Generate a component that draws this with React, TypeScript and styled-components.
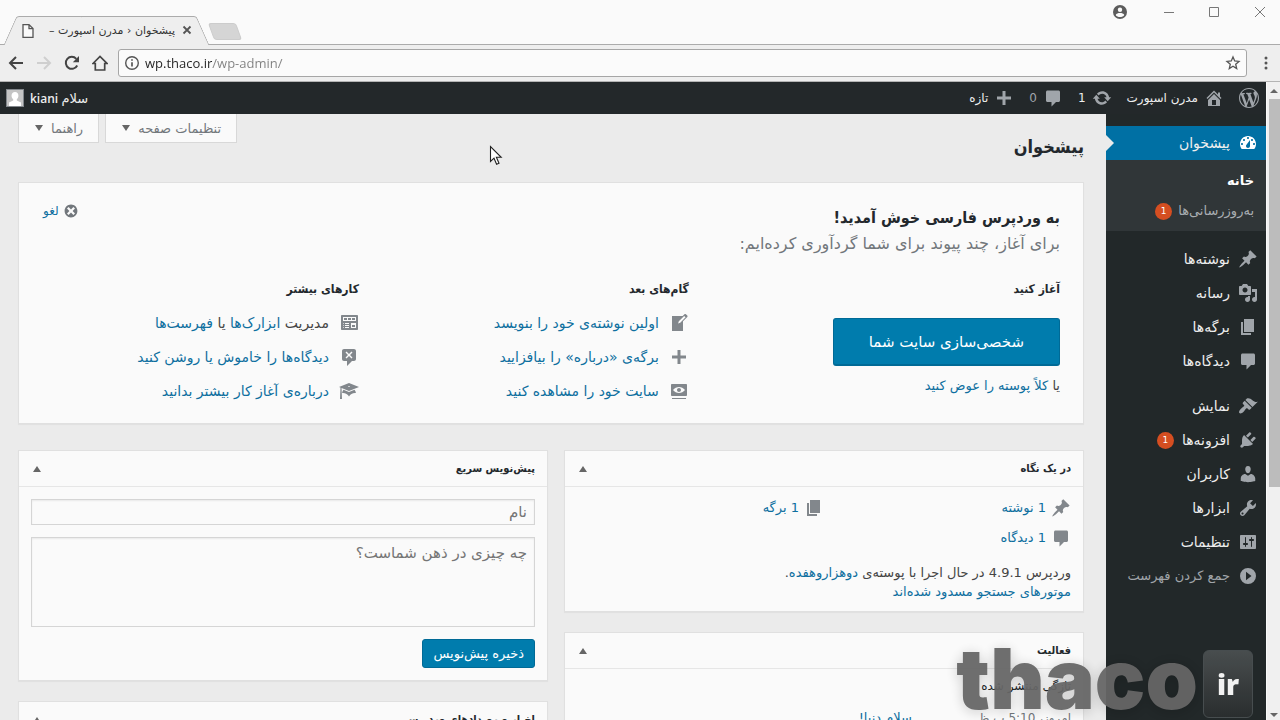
import React from "react";
import styled, { createGlobalStyle, css } from "styled-components";

const persian = '"DejaVu Sans", "Noto Sans", sans-serif';
const heading = '"DejaVu Sans Condensed", "DejaVu Sans", sans-serif';
const latin = '"Open Sans", "DejaVu Sans", sans-serif';

const GlobalStyle = createGlobalStyle`
  *, *::before, *::after { box-sizing: border-box; }
  body { margin: 0; background: #ebebeb; font-family: ${persian}; font-size: 13px; line-height: 20px; color: #444; }
  h1, h2, h3, p, ul { margin: 0; padding: 0; }
  h1, h2, h3 { font-family: ${heading}; color: #23282d; }
  ul { list-style: none; }
  button, input, textarea { font-family: inherit; }
  button { border: 0; background: none; padding: 0; cursor: pointer; color: inherit; }
  a { color: #0e6f9f; text-decoration: none; }
`;

const paths = {
  wordpress:
    "M20 10c0-5.51-4.49-10-10-10C4.48 0 0 4.49 0 10c0 5.52 4.48 10 10 10 5.51 0 10-4.48 10-10zM7.78 15.37L4.37 6.22c.55-.02 1.17-.08 1.17-.08.5-.06.44-1.13-.06-1.11 0 0-1.45.11-2.37.11-.18 0-.37 0-.58-.01C4.12 2.69 6.87 1.11 10 1.11c2.33 0 4.45.87 6.05 2.34-.68-.11-1.65.39-1.65 1.58 0 .74.45 1.36.9 2.1.35.61.55 1.36.55 2.46 0 1.49-1.4 5-1.4 5l-3.03-8.37c.54-.02.82-.17.82-.17.5-.05.44-1.25-.06-1.22 0 0-1.44.12-2.38.12-.87 0-2.33-.12-2.33-.12-.5-.03-.56 1.2-.06 1.22l.92.08 1.26 3.41zM17.41 10c.24-.64.74-1.87.43-4.25.7 1.29 1.05 2.71 1.05 4.25 0 3.29-1.73 6.24-4.4 7.78.97-2.59 1.94-5.2 2.92-7.78zM6.1 18.09C3.12 16.65 1.11 13.53 1.11 10c0-1.3.23-2.48.72-3.59C3.25 10.3 4.67 14.2 6.1 18.09zm4.03-6.63l2.58 6.98c-.86.29-1.76.45-2.71.45-.79 0-1.57-.11-2.29-.33.81-2.38 1.62-4.74 2.42-7.1z",
  home: "M16 8.5l1.53 1.53-1.06 1.06L10 4.6l-6.47 6.49-1.06-1.06L10 2.5l4 4v-2h2v4zm-6-2.46l6 5.99V18H4v-5.97zM12 17v-5H8v5h4z",
  update:
    "M10.2 3.28c3.53 0 6.43 2.61 6.92 6h2.08l-3.5 4-3.5-4h2.32c-.45-1.97-2.21-3.45-4.32-3.45-1.45 0-2.73.71-3.54 1.78L4.95 5.66C6.23 4.2 8.11 3.28 10.2 3.28zm-.4 13.44c-3.52 0-6.43-2.61-6.92-6H.8l3.5-4c1.17 1.33 2.33 2.67 3.5 4H5.48c.45 1.97 2.21 3.45 4.32 3.45 1.45 0 2.73-.71 3.54-1.78l1.71 1.95c-1.28 1.46-3.15 2.38-5.25 2.38z",
  comment:
    "M4.500 2.500h11c.8 0 1.500.7 1.500 1.500v8.500c0 .8-.7 1.500-1.500 1.500H13l-4.500 4.500V14h-4c-.8 0-1.500-.7-1.500-1.500V4c0-.8.7-1.500 1.500-1.500z",
  plus: "M17 8.5v3h-5.5V17h-3v-5.5H3v-3h5.5V3h3v5.5z",
  dashboard:
    "M3.76 16h12.48c1.1-1.37 1.76-3.11 1.76-5 0-4.42-3.58-8-8-8s-8 3.58-8 8c0 1.89.66 3.63 1.76 5zM10 4c.55 0 1 .45 1 1s-.45 1-1 1-1-.45-1-1 .45-1 1-1zM6 6c.55 0 1 .45 1 1s-.45 1-1 1-1-.45-1-1 .45-1 1-1zm8 0c.55 0 1 .45 1 1s-.45 1-1 1-1-.45-1-1 .45-1 1-1zm-5.37 5.55L12 7v6c0 1.1-.9 2-2 2s-2-.9-2-2c0-.57.24-1.08.63-1.45zM4 10c.55 0 1 .45 1 1s-.45 1-1 1-1-.45-1-1 .45-1 1-1zm12 0c.55 0 1 .45 1 1s-.45 1-1 1-1-.45-1-1 .45-1 1-1z",
  pin: "M10.44 3.02l1.82-1.82 6.36 6.35-1.83 1.82c-1.05-.68-2.48-.57-3.41.36l-.75.75c-.92.93-1.04 2.35-.35 3.41l-1.83 1.82-2.41-2.41-2.8 2.79c-.42.42-3.38 2.71-3.8 2.29s1.86-3.39 2.28-3.81l2.79-2.79L4.1 9.36l1.83-1.82c1.05.69 2.48.57 3.4-.36l.75-.75c.93-.92 1.05-2.35.36-3.41z",
  media:
    "M13 11V4c0-.55-.45-1-1-1h-1.67L9 1H5L3.67 3H2c-.55 0-1 .45-1 1v7c0 .55.45 1 1 1h10c.55 0 1-.45 1-1zM7 4.5c1.38 0 2.5 1.12 2.5 2.5S8.38 9.5 7 9.5 4.5 8.38 4.5 7 5.62 4.5 7 4.5zM14 6h5v10.5c0 1.38-1.12 2.5-2.5 2.5S14 17.88 14 16.5s1.12-2.5 2.5-2.5c.17 0 .34.02.5.05V9h-3V6zm-4 8.05V13h2v3.5c0 1.38-1.12 2.5-2.5 2.5S7 17.88 7 16.5 8.12 14 9.5 14c.17 0 .34.02.5.05z",
  page: "M6 15V2h10v13H6zm-1 1h8v2H3V5h2v11z",
  brush:
    "M14.48 11.06L7.41 3.99l1.5-1.5c.5-.56 2.3-.47 3.51.32 1.21.8 1.43 1.28 2.91 2.1 1.18.64 2.45 1.26 4.45.85zm-.71.71L6.7 4.7 4.93 6.47c-.39.39-.39 1.02 0 1.41l1.06 1.06c.39.39.39 1.03 0 1.42-.6.6-1.43 1.11-2.21 1.69-.35.26-.7.53-1.01.84C1.43 14.23.4 16.08 1.4 17.07c.99 1 2.84-.03 4.18-1.36.31-.31.58-.66.85-1.02.57-.78 1.08-1.61 1.69-2.21.39-.39 1.02-.39 1.41 0l1.06 1.06c.39.39 1.02.39 1.41 0z",
  plug: "M13.11 4.36L9.87 7.6 8 5.73l3.24-3.24c.35-.34 1.05-.2 1.56.32.52.51.66 1.21.31 1.55zm-8 1.77l.91-1.12 9.01 9.01-1.19.84c-.71.71-2.63 1.16-3.82 1.16H6.14L4.9 17.26c-.59.59-1.54.59-2.12 0-.59-.58-.59-1.53 0-2.12l1.24-1.24v-3.88c0-1.13.4-3.19 1.09-3.89zm7.26 3.97l3.24-3.24c.34-.35 1.04-.21 1.55.31.52.51.66 1.21.31 1.55l-3.24 3.25z",
  user: "M10 9.25c-2.27 0-2.73-3.44-2.73-3.44C7 4.02 7.82 2 9.97 2c2.16 0 2.98 2.02 2.71 3.81 0 0-.41 3.44-2.68 3.44zm0 2.57L12.72 10c2.39 0 4.52 2.33 4.52 4.53v2.49s-3.65 1.13-7.24 1.13c-3.65 0-7.24-1.13-7.24-1.13v-2.49c0-2.25 1.94-4.48 4.47-4.48z",
  wrench:
    "M16.68 9.77c-1.34 1.34-3.3 1.67-4.95.99l-5.41 6.52c-.99.99-2.59.99-3.58 0s-.99-2.59 0-3.57l6.52-5.42c-.68-1.65-.35-3.61.99-4.95 1.28-1.28 3.12-1.62 4.72-1.06l-2.89 2.89 2.82 2.82 2.86-2.87c.53 1.58.18 3.39-1.08 4.65zM3.81 16.21c.4.39 1.04.39 1.43 0 .4-.4.4-1.04 0-1.43-.39-.4-1.03-.4-1.43 0-.39.39-.39 1.03 0 1.43z",
  settings:
    "M18 16V4c0-.55-.45-1-1-1H3c-.55 0-1 .45-1 1v12c0 .55.45 1 1 1h14c.55 0 1-.45 1-1zM8 11h1c.55 0 1 .45 1 1s-.45 1-1 1H8v1.5c0 .28-.22.5-.5.5s-.5-.22-.5-.5V13H6c-.55 0-1-.45-1-1s.45-1 1-1h1V5.5c0-.28.22-.5.5-.5s.5.22.5.5V11zm5-2h-1c-.55 0-1-.45-1-1s.45-1 1-1h1V5.5c0-.28.22-.5.5-.5s.5.22.5.5V7h1c.55 0 1 .45 1 1s-.45 1-1 1h-1v5.5c0 .28-.22.5-.5.5s-.5-.22-.5-.5V9z",
  collapse: "M10 2a8 8 0 1 0 0 16 8 8 0 1 0 0-16zM8 5.8l5.5 4.2L8 14.2z",
  dismiss:
    "M10 2c4.42 0 8 3.58 8 8s-3.58 8-8 8-8-3.58-8-8 3.58-8 8-8zm5 11l-3-3 3-3-2-2-3 3-3-3-2 2 3 3-3 3 2 2 3-3 3 3z",
  write:
    "M16.89 1.2l1.41 1.41c.39.39.39 1.02 0 1.41L14 8.33V18H3V3h10.67l1.8-1.8c.4-.39 1.03-.4 1.42 0zm-5.66 8.48l5.37-5.36-1.42-1.42-5.36 5.37-.71 2.12z",
  view: "M18 14V4c0-.55-.45-1-1-1H3c-.55 0-1 .45-1 1v10c0 .55.45 1 1 1h14c.55 0 1-.45 1-1zm-8-8c2.3 0 4.4 1.14 6 3-1.6 1.86-3.7 3-6 3s-4.4-1.14-6-3c1.6-1.86 3.7-3 6-3zm2 3c0-1.1-.9-2-2-2s-2 .9-2 2 .9 2 2 2 2-.9 2-2zm2 8h3v1H3v-1h11z",
  widgets:
    "M19 16V3c0-.55-.45-1-1-1H3c-.55 0-1 .45-1 1v13c0 .55.45 1 1 1h15c.55 0 1-.45 1-1zM4 4h13v4H4V4zm1 1v2h3V5H5zm4 0v2h3V5H9zm4 0v2h3V5h-3zm-8.5 5c.28 0 .5.22.5.5s-.22.5-.5.5-.5-.22-.5-.5.22-.5.5-.5zM6 10h4v1H6v-1zm6 0h5v5h-5v-5zm-7.5 2c.28 0 .5.22.5.5s-.22.5-.5.5-.5-.22-.5-.5.22-.5.5-.5zM6 12h4v1H6v-1zm7 0v2h3v-2h-3zm-8.5 2c.28 0 .5.22.5.5s-.22.5-.5.5-.5-.22-.5-.5.22-.5.5-.5zM6 14h4v1H6v-1z",
  commentOff:
    "M5 2h10c1.1 0 2 .9 2 2v8c0 1.1-.9 2-2 2h-2l-5 5v-5H5c-1.1 0-2-.9-2-2V4c0-1.1.9-2 2-2zm8.5 8.5L11 8l2.5-2.5-1-1L10 7 7.5 4.5l-1 1L9 8l-2.5 2.5 1 1L10 9l2.5 2.5z",
  learn:
    "M10 10L2.54 7.02 3 18H1l.48-11.41L0 6l10-4 10 4zm0-5c-.55 0-1 .22-1 .5s.45.5 1 .5 1-.22 1-.5-.45-.5-1-.5zm0 6l5.57-2.23c.71.94 1.2 2.07 1.36 3.3-.3-.04-.61-.07-.93-.07-2.55 0-4.78 1.37-6 3.41C8.78 13.37 6.55 12 4 12c-.32 0-.63.03-.93.07.16-1.23.65-2.36 1.36-3.3z",
};

type IconName = keyof typeof paths;

const IconSvg = styled.svg`
  flex: none;
  display: block;
  fill: currentColor;
`;

const Icon = ({ name, size = 20 }: { name: IconName; size?: number }) => (
  <IconSvg width={size} height={size} viewBox="0 0 20 20" aria-hidden="true">
    <path fillRule="evenodd" d={paths[name]} />
  </IconSvg>
);

/* ---------- browser window ---------- */

const Window = styled.div`
  position: relative;
  display: flex;
  flex-direction: column;
  height: 100vh;
  overflow: hidden;
`;

const TitleBar = styled.div`
  flex: none;
  display: flex;
  align-items: flex-end;
  height: 45px;
  padding-left: 10px;
  background: #fafafa;
  border-bottom: 1px solid #ababab;
`;

const slant = css`
  content: "";
  position: absolute;
  z-index: -1;
  top: 0;
  bottom: 0;
  background: #eeeeee;
  border-top: 1px solid #ababab;
`;

const BrowserTab = styled.div`
  position: relative;
  z-index: 0;
  display: flex;
  align-items: center;
  width: 193px;
  height: 29px;
  margin-bottom: -1px;
  padding: 0 11px;
  &::before {
    ${slant}
    left: 0;
    right: 50%;
    border-left: 1px solid #ababab;
    border-top-left-radius: 3px;
    transform: skewX(-24deg);
  }
  &::after {
    ${slant}
    left: 40%;
    right: 0;
    border-right: 1px solid #ababab;
    border-top-right-radius: 3px;
    transform: skewX(24deg);
  }
`;

const TabTitle = styled.span`
  flex: 1;
  margin: 0 7px 0 12px;
  overflow: hidden;
  white-space: nowrap;
  font-size: 11px;
  color: #333;
`;

const NewTab = styled.button`
  width: 28px;
  height: 17px;
  margin: 0 0 4px 8px;
  background: #d5d5d5;
  border: 1px solid #cccccc;
  border-radius: 3px;
  transform: skewX(20deg);
`;

const WindowControls = styled.div`
  display: flex;
  align-items: center;
  align-self: flex-start;
  gap: 33px;
  height: 24px;
  margin-left: auto;
  padding-right: 13px;
  color: #777;
  button:first-child { margin-right: 3px; color: #5c5c5c; }
  svg { display: block; }
`;

const Toolbar = styled.div`
  flex: none;
  display: flex;
  align-items: center;
  gap: 12px;
  height: 37px;
  padding: 0 7px 0 8px;
  background: #eeeeee;
  border-bottom: 1px solid #b4b4b4;
  color: #444;
  svg { display: block; }
  > button:last-child { padding: 0 3px; }
`;

const AddressBar = styled.div`
  flex: 1;
  display: flex;
  align-items: center;
  height: 28px;
  margin-left: -2px;
  padding: 0 5px;
  background: #fbfbfb;
  border: 1px solid #a6a6a6;
  border-radius: 3px;
`;

const Address = styled.input`
  flex: 1;
  min-width: 0;
  height: 24px;
  margin-left: 5px;
  padding: 0;
  border: 0;
  outline: 0;
  font-family: ${latin};
  font-size: 13px;
  color: #555;
  background: linear-gradient(to right, #222 67px, #808080 67px);
  background-clip: text;
  -webkit-text-fill-color: transparent;
`;

const Viewport = styled.div`
  flex: 1;
  min-height: 0;
  display: flex;
`;

const Scrollbar = styled.div`
  flex: none;
  width: 14px;
  display: flex;
  flex-direction: column;
  align-items: center;
  justify-content: space-between;
  padding: 7px 0 3px;
  background: linear-gradient(#bcbcbc, #bcbcbc) 2px 17px / 12px 388px no-repeat #f0f0f0;
  border-left: 1px solid #fafafa;
`;

const Triangle = styled.span<{ $down?: boolean }>`
  flex: none;
  display: block;
  width: 0;
  height: 0;
  border: 0 solid transparent;
  border-width: ${(p) => (p.$down ? "6px 4px 0" : "0 4px 6px")};
  border-${(p) => (p.$down ? "top" : "bottom")}-color: #666;
`;

const ScrollArrow = styled(Triangle)`
  border-width: ${(p) => (p.$down ? "4px 4px 0" : "0 4px 4px")};
`;

/* ---------- admin page ---------- */

const AdminPage = styled.div`
  flex: 1;
  min-width: 0;
  display: flex;
  flex-direction: column;
  overflow: hidden;
`;

const AdminBar = styled.header`
  flex: none;
  display: flex;
  align-items: center;
  gap: 15px;
  height: 32px;
  padding: 0 7px 0 6px;
  background: #23282a;
  color: #eee;
`;

const BarLink = styled.a<{ $dim?: boolean }>`
  display: flex;
  align-items: center;
  gap: 6px;
  color: ${(p) => (p.$dim ? "#a0a5aa" : "#eee")};
  font-size: 12px;
  svg { color: #a0a5aa; }
`;

const Account = styled(BarLink)`
  margin-right: auto;
  font-family: ${latin};
  font-size: 13px;
  b { font-size: 12px; font-weight: 600; }
`;

const Avatar = styled.span`
  display: block;
  width: 18px;
  height: 18px;
  background: #c4c4c4;
  border: 1px solid #82878c;
  svg { display: block; color: #fff; }
`;

const Columns = styled.div`
  flex: 1;
  min-height: 0;
  display: flex;
`;

const Sidebar = styled.nav`
  flex: none;
  width: 160px;
  padding-top: 12px;
  background: #222829;
`;

const MenuGroup = styled.ul`
  margin-bottom: 11px;
`;

const MenuLink = styled.a<{ $current?: boolean; $dim?: boolean }>`
  position: relative;
  display: flex;
  align-items: center;
  gap: 8px;
  height: 34px;
  padding-right: 8px;
  font-size: ${(p) => (p.$dim ? 13 : 14)}px;
  color: ${(p) => (p.$dim ? "#a0a5aa" : "#eee")};
  background: ${(p) => (p.$current ? "#0070a4" : "none")};
  svg { color: ${(p) => (p.$current ? "#fff" : "#a0a5aa")}; }
  ${(p) =>
    p.$current &&
    css`
      &::after {
        content: "";
        position: absolute;
        left: 0;
        top: 9px;
        border: 8px solid transparent;
        border-left-color: #ebebeb;
        border-right-width: 0;
      }
    `}
`;

const SubMenu = styled.ul`
  padding: 6px 12px 5px;
  background: #303638;
`;

const SubLink = styled.a<{ $current?: boolean }>`
  display: flex;
  align-items: center;
  gap: 6px;
  height: 30px;
  font-weight: ${(p) => (p.$current ? 700 : 400)};
  color: ${(p) => (p.$current ? "#fff" : "#a9aeb2")};
`;

const Count = styled.span`
  width: 17px;
  height: 17px;
  border-radius: 50%;
  background: #d54e21;
  color: #fff;
  font-size: 9px;
  line-height: 17px;
  text-align: center;
`;

const Main = styled.main`
  flex: 1;
  min-width: 0;
  padding: 0 22px 0 18px;
  background: #ebebeb;
`;

const TopRow = styled.div`
  display: flex;
  align-items: flex-start;
  gap: 6px;
  height: 68px;
`;

const PageTitle = styled.h1`
  margin-left: auto;
  padding-top: 18px;
  font-size: 18px;
  line-height: 29px;
`;

const MetaTab = styled.button`
  display: flex;
  align-items: center;
  gap: 8px;
  height: 29px;
  padding: 0 15px 0 16px;
  background: #fafafa;
  border: 1px solid #d8d8d8;
  border-top: 0;
  font-size: 13px;
  color: #72777c;
`;

const card = css`
  background: #fafafa;
  border: 1px solid #e0e0e0;
  box-shadow: 0 1px 1px rgba(0, 0, 0, 0.04);
`;

const Welcome = styled.section`
  position: relative;
  ${card}
  height: 242px;
  padding: 22px 23px 0 10px;
`;

const WelcomeTitle = styled.h2`
  font-size: 16px;
  line-height: 26px;
`;

const WelcomeText = styled.p`
  font-size: 16px;
  line-height: 26px;
  color: #72777c;
`;

const Dismiss = styled.button`
  position: absolute;
  top: 18px;
  left: 24px;
  display: flex;
  align-items: center;
  gap: 4px;
  font-size: 12px;
  line-height: 20px;
  color: #0e6f9f;
  svg { color: #72777c; }
`;

const WelcomeColumns = styled.div`
  display: grid;
  grid-template-columns: 36fr 32fr 32fr;
  padding-top: 22px;
`;

const ColumnTitle = styled.h3`
  margin-bottom: 7px;
  font-size: 12px;
  line-height: 20px;
`;

const Primary = styled.button<{ $hero?: boolean }>`
  display: block;
  height: ${(p) => (p.$hero ? 48 : 29)}px;
  padding: ${(p) => (p.$hero ? "0 35px" : "0 10px")};
  background: #007cad;
  border: 1px solid #006a96;
  border-bottom-width: ${(p) => (p.$hero ? 2 : 1)}px;
  border-radius: 3px;
  color: #fff;
  font-size: ${(p) => (p.$hero ? 15 : 13)}px;
`;

const HeroAction = styled.div`
  padding-top: 12px;
  p { padding-top: 10px; }
`;

const ActionList = styled.ul`
  li {
    display: flex;
    align-items: center;
    gap: 10px;
    height: 34px;
    font-size: 14px;
  }
  svg { color: #82878c; }
`;

const Boxes = styled.div`
  display: grid;
  grid-template-columns: 520fr 530fr;
  align-items: start;
  gap: 16px;
  padding-top: 26px;
`;

const BoxColumn = styled.div`
  display: flex;
  flex-direction: column;
  gap: 20px;
`;

const Box = styled.section`
  ${card}
`;

const BoxHeader = styled.div`
  display: flex;
  align-items: center;
  justify-content: space-between;
  height: 36px;
  padding: 0 12px 0 14px;
  border-bottom: 1px solid #e6e6e6;
  h2 { font-size: 11px; line-height: 20px; }
`;

const Stats = styled.ul`
  display: grid;
  grid-template-columns: 50% 50%;
  padding: 6px 12px;
  li { display: flex; align-items: center; gap: 5px; height: 30px; }
  svg { color: #82878c; }
`;

const Version = styled.div`
  padding: 4px 12px 10px;
  line-height: 19px;
`;

const DraftForm = styled.form`
  display: flex;
  flex-direction: column;
  align-items: flex-start;
  gap: 12px;
  padding: 12px;
`;

const field = css`
  display: block;
  width: 100%;
  padding: 2px 7px;
  background: #fafafa;
  border: 1px solid #d5d5d5;
  box-shadow: inset 0 1px 2px rgba(0, 0, 0, 0.07);
  font-size: 15px;
  &::placeholder { color: #757575; opacity: 1; }
`;

const Field = styled.input`
  ${field}
  height: 26px;
`;

const Area = styled.textarea`
  ${field}
  height: 90px;
  padding-top: 5px;
  line-height: 20px;
  resize: none;
`;

const Activity = styled.div`
  padding: 7px 12px;
  h3 { font-family: ${persian}; font-size: 12px; line-height: 20px; font-weight: 400; }
`;

const ActivityRow = styled.div`
  display: flex;
  padding-top: 12px;
  color: #72777c;
  span { flex: none; width: 159px; font-size: 12px; }
`;

/* ---------- things that float over the page ---------- */

const Pointer = styled.svg`
  position: absolute;
  left: 489px;
  top: 145px;
`;

const Watermark = styled.div`
  position: absolute;
  right: 27px;
  bottom: 2px;
  display: flex;
  align-items: flex-end;
  gap: 5px;
  opacity: 0.94;
  pointer-events: none;
`;

const WatermarkName = styled.span`
  font-family: Inter, sans-serif;
  font-weight: 900;
  font-size: 84px;
  line-height: 78px;
  color: #666;
  text-shadow: 0 2px 14px rgba(0, 0, 0, 0.2);
`;

const WatermarkKey = styled.span`
  width: 50px;
  height: 68px;
  border-radius: 6px;
  border: 1px solid #4a5052;
  background: linear-gradient(#4b5051, #2a2e2f);
  color: #fff;
  font-family: ${latin};
  font-weight: 800;
  font-size: 28px;
  line-height: 66px;
  text-align: center;
`;

type Entry = { icon: IconName; label: string; count?: number; dim?: boolean };

const contentMenu: Entry[] = [
  { icon: "pin", label: "نوشته‌ها" },
  { icon: "media", label: "رسانه" },
  { icon: "page", label: "برگه‌ها" },
  { icon: "comment", label: "دیدگاه‌ها" },
];

const siteMenu: Entry[] = [
  { icon: "brush", label: "نمایش" },
  { icon: "plug", label: "افزونه‌ها", count: 1 },
  { icon: "user", label: "کاربران" },
  { icon: "wrench", label: "ابزارها" },
  { icon: "settings", label: "تنظیمات" },
  { icon: "collapse", label: "جمع کردن فهرست", dim: true },
];

const Menu = ({ entries }: { entries: Entry[] }) => (
  <MenuGroup>
    {entries.map((e) => (
      <li key={e.label}>
        <MenuLink href="#" $dim={e.dim}>
          <Icon name={e.icon} />
          {e.label}
          {e.count && <Count>{e.count}</Count>}
        </MenuLink>
      </li>
    ))}
  </MenuGroup>
);

const MetaBox = ({ title, children }: { title: string; children?: React.ReactNode }) => (
  <Box>
    <BoxHeader>
      <h2>{title}</h2>
      <button aria-label={title}>
        <Triangle />
      </button>
    </BoxHeader>
    {children}
  </Box>
);

const BrowserChrome = () => (
  <>
    <TitleBar>
      <BrowserTab>
        <svg width="14" height="16" viewBox="0 0 14 16" fill="#fafafa" stroke="#555" strokeWidth="1.3">
          <path d="M2 1.6h6l4 4v8.8H2zM8 1.6v4h4" />
        </svg>
        <TabTitle dir="rtl">پیشخوان ‹ مدرن اسپورت –</TabTitle>
        <button aria-label="Close tab">
          <svg width="10" height="10" viewBox="0 0 10 10" stroke="#555" strokeWidth="1.8">
            <path d="M1.500 1.500l7 7M8.500 1.500l-7 7" />
          </svg>
        </button>
      </BrowserTab>
      <NewTab aria-label="New tab" />
      <WindowControls>
        <button aria-label="Profile">
          <svg width="14" height="14" viewBox="0 0 14 14">
            <circle cx="7" cy="7" r="7" fill="#5c5c5c" />
            <circle cx="7" cy="4.8" r="2.2" fill="#fafafa" />
            <path d="M2.7 9.9c1.2-2.4 7.4-2.4 8.6 0-1.6 2.8-7 2.8-8.6 0z" fill="#fafafa" />
          </svg>
        </button>
        <button aria-label="Minimize">
          <svg width="12" height="12" viewBox="0 0 12 12" stroke="currentColor">
            <path d="M1 6.5h10" />
          </svg>
        </button>
        <button aria-label="Maximize">
          <svg width="12" height="12" viewBox="0 0 12 12" stroke="currentColor" fill="none">
            <path d="M1.500 1.500h9v9h-9z" />
          </svg>
        </button>
        <button aria-label="Close">
          <svg width="14" height="12" viewBox="0 0 14 12" stroke="currentColor">
            <path d="M2 1l10 10M12 1L2 11" />
          </svg>
        </button>
      </WindowControls>
    </TitleBar>
    <Toolbar>
      <button aria-label="Back">
        <svg width="16" height="16" viewBox="0 0 16 16" fill="none" stroke="#444" strokeWidth="2">
          <path d="M15 8H2M8 2L2 8l6 6" />
        </svg>
      </button>
      <button aria-label="Forward">
        <svg width="16" height="16" viewBox="0 0 16 16" fill="none" stroke="#cfcfcf" strokeWidth="2">
          <path d="M1 8h13M8 2l6 6-6 6" />
        </svg>
      </button>
      <button aria-label="Reload">
        <svg width="16" height="16" viewBox="0 0 16 16" fill="none" stroke="#444" strokeWidth="2">
          <path d="M13.200 10.500A6 6 0 1 1 12.300 3.800" />
          <path d="M15 1v6.200H8.800z" fill="#444" stroke="none" />
        </svg>
      </button>
      <button aria-label="Home">
        <svg width="16" height="16" viewBox="0 0 16 16" fill="none" stroke="#444" strokeWidth="1.700">
          <path d="M1 8.500L8 1.500l7 7h-2.300V15H3.300V8.500z" />
        </svg>
      </button>
      <AddressBar>
        <svg width="16" height="16" viewBox="0 0 16 16" fill="none" stroke="#555" strokeWidth="1.400">
          <circle cx="8" cy="8" r="6.300" />
          <path d="M8 7.200v4.300M8 4.200v1.600" strokeWidth="1.700" />
        </svg>
        <Address aria-label="Address" defaultValue="wp.thaco.ir/wp-admin/" />
        <button aria-label="Bookmark">
          <svg width="16" height="16" viewBox="0 0 16 16" fill="none" stroke="#555" strokeWidth="1.300">
            <path d="M8 2l1.700 4 4.300.4-3.300 2.800 1 4.300L8 11.200l-3.700 2.300 1-4.300L2 6.400 6.300 6z" />
          </svg>
        </button>
      </AddressBar>
      <button aria-label="Menu">
        <svg width="8" height="16" viewBox="0 0 8 16" fill="#555">
          <circle cx="4" cy="3" r="1.500" />
          <circle cx="4" cy="8" r="1.500" />
          <circle cx="4" cy="13" r="1.500" />
        </svg>
      </button>
    </Toolbar>
  </>
);

export default function App() {
  return (
    <Window>
      <GlobalStyle />
      <BrowserChrome />
      <Viewport>
        <AdminPage dir="rtl" lang="fa">
          <AdminBar>
            <BarLink href="#" aria-label="WordPress">
              <Icon name="wordpress" />
            </BarLink>
            <BarLink href="#">
              <Icon name="home" />
              مدرن اسپورت
            </BarLink>
            <BarLink href="#">
              <Icon name="update" />1
            </BarLink>
            <BarLink href="#" $dim>
              <Icon name="comment" />0
            </BarLink>
            <BarLink href="#">
              <Icon name="plus" />
              تازه
            </BarLink>
            <Account href="#">
              <span>
                سلام <b>kiani</b>
              </span>
              <Avatar>
                <svg width="16" height="16" viewBox="0 0 16 16" fill="currentColor">
                  <path d="M8 2c4.500 0 4 6 1.800 7.300v1.200L14 12.500V16H2v-3.500l4.200-2V9.300C4 8 3.500 2 8 2z" />
                </svg>
              </Avatar>
            </Account>
          </AdminBar>
          <Columns>
            <Sidebar>
              <MenuGroup>
                <li>
                  <MenuLink href="#" $current>
                    <Icon name="dashboard" />
                    پیشخوان
                  </MenuLink>
                  <SubMenu>
                    <li>
                      <SubLink href="#" $current>
                        خانه
                      </SubLink>
                    </li>
                    <li>
                      <SubLink href="#">
                        به‌روزرسانی‌ها
                        <Count>1</Count>
                      </SubLink>
                    </li>
                  </SubMenu>
                </li>
              </MenuGroup>
              <Menu entries={contentMenu} />
              <Menu entries={siteMenu} />
            </Sidebar>
            <Main>
              <TopRow>
                <PageTitle>پیشخوان</PageTitle>
                <MetaTab>
                  تنظیمات صفحه
                  <Triangle $down />
                </MetaTab>
                <MetaTab>
                  راهنما
                  <Triangle $down />
                </MetaTab>
              </TopRow>
              <Welcome>
                <Dismiss>
                  <Icon name="dismiss" size={16} />
                  لغو
                </Dismiss>
                <WelcomeTitle>به وردپرس فارسی خوش آمدید!</WelcomeTitle>
                <WelcomeText>برای آغاز، چند پیوند برای شما گردآوری کرده‌ایم:</WelcomeText>
                <WelcomeColumns>
                  <div>
                    <ColumnTitle>آغاز کنید</ColumnTitle>
                    <HeroAction>
                      <Primary $hero>شخصی‌سازی سایت شما</Primary>
                      <p>
                        یا <a href="#">کلاً پوسته را عوض کنید</a>
                      </p>
                    </HeroAction>
                  </div>
                  <div>
                    <ColumnTitle>گام‌های بعد</ColumnTitle>
                    <ActionList>
                      <li>
                        <Icon name="write" />
                        <a href="#">اولین نوشته‌ی خود را بنویسد</a>
                      </li>
                      <li>
                        <Icon name="plus" />
                        <a href="#">برگه‌ی «درباره» را بیافزایید</a>
                      </li>
                      <li>
                        <Icon name="view" />
                        <a href="#">سایت خود را مشاهده کنید</a>
                      </li>
                    </ActionList>
                  </div>
                  <div>
                    <ColumnTitle>کارهای بیشتر</ColumnTitle>
                    <ActionList>
                      <li>
                        <Icon name="widgets" />
                        <span>
                          مدیریت <a href="#">ابزارک‌ها</a> یا <a href="#">فهرست‌ها</a>
                        </span>
                      </li>
                      <li>
                        <Icon name="commentOff" />
                        <a href="#">دیدگاه‌ها را خاموش یا روشن کنید</a>
                      </li>
                      <li>
                        <Icon name="learn" />
                        <a href="#">درباره‌ی آغاز کار بیشتر بدانید</a>
                      </li>
                    </ActionList>
                  </div>
                </WelcomeColumns>
              </Welcome>
              <Boxes>
                <BoxColumn>
                  <MetaBox title="در یک نگاه">
                    <Stats>
                      <li>
                        <Icon name="pin" />
                        <a href="#">1 نوشته</a>
                      </li>
                      <li>
                        <Icon name="page" />
                        <a href="#">1 برگه</a>
                      </li>
                      <li>
                        <Icon name="comment" />
                        <a href="#">1 دیدگاه</a>
                      </li>
                    </Stats>
                    <Version>
                      <p>
                        وردپرس 4.9.1 در حال اجرا با پوسته‌ی <a href="#">دوهزاروهفده</a>.
                      </p>
                      <p>
                        <a href="#">موتورهای جستجو مسدود شده‌اند</a>
                      </p>
                    </Version>
                  </MetaBox>
                  <MetaBox title="فعالیت">
                    <Activity>
                      <h3>تازگی منتشر شده</h3>
                      <ActivityRow>
                        <span>امروز، 5:10 ب.ظ</span>
                        <a href="#">سلام دنیا!</a>
                      </ActivityRow>
                    </Activity>
                  </MetaBox>
                </BoxColumn>
                <BoxColumn>
                  <MetaBox title="پیش‌نویس سریع">
                    <DraftForm>
                      <Field aria-label="نام" placeholder="نام" />
                      <Area aria-label="چه چیزی در ذهن شماست؟" placeholder="چه چیزی در ذهن شماست؟" />
                      <Primary type="button">ذخیره پیش‌نویس</Primary>
                    </DraftForm>
                  </MetaBox>
                  <MetaBox title="اخبار و رویدادهای وردپرس" />
                </BoxColumn>
              </Boxes>
            </Main>
          </Columns>
        </AdminPage>
        <Scrollbar>
          <ScrollArrow />
          <ScrollArrow $down />
        </Scrollbar>
      </Viewport>
      <Pointer width="14" height="21" viewBox="0 0 14 21" fill="#fff" stroke="#222" strokeWidth="1.100">
        <path d="M1.500 1.500v15l3.500-3.300 2.600 6 2.400-1-2.600-5.900h4.800z" />
      </Pointer>
      <Watermark>
        <WatermarkName>thaco</WatermarkName>
        <WatermarkKey>ir</WatermarkKey>
      </Watermark>
    </Window>
  );
}
